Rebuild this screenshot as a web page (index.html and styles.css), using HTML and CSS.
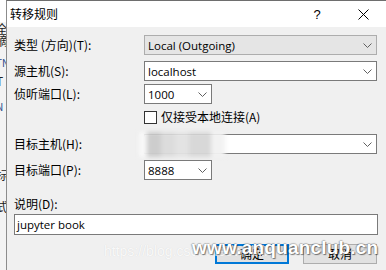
FILE: index.html
```html
<!DOCTYPE html>
<html>
<head>
<meta charset="utf-8">
<link rel="stylesheet" href="styles.css">
</head>
<body>
<div class="screen">
  <div class="behind">
    <div class="frag f1">全</div>
    <div class="frag f2">摘</div>
    <div class="frag f3 blue">TN</div>
    <div class="frag f4">T</div>
    <div class="frag f5 blue">N</div>
    <div class="frag f6">标</div>
    <div class="frag f7">式</div>
  </div>
  <div class="dialog">
    <div class="titlebar">
      <span class="title">转移规则</span>
      <span class="help">?</span>
      <span class="close"><svg width="11" height="11" viewBox="0 0 11 11"><path d="M0.5 0.5 L10.5 10.5 M10.5 0.5 L0.5 10.5" stroke="#000" stroke-width="1" fill="none"/></svg></span>
    </div>
    <div class="body">
      <div class="row r1">
        <span class="lbl">类型 (方向)(T):</span>
        <div class="combo wide grey"><span class="val">Local (Outgoing)</span><svg class="chev" width="9" height="5" viewBox="0 0 9 5"><path d="M0.5 0.5 L4.5 4.5 L8.5 0.5" stroke="#606060" fill="none"/></svg></div>
      </div>
      <div class="row r2">
        <span class="lbl">源主机(S):</span>
        <div class="combo wide"><span class="val">localhost</span><svg class="chev" width="9" height="5" viewBox="0 0 9 5"><path d="M0.5 0.5 L4.5 4.5 L8.5 0.5" stroke="#606060" fill="none"/></svg></div>
      </div>
      <div class="row r3">
        <span class="lbl">侦听端口(L):</span>
        <div class="combo small"><span class="val">1000</span><svg class="chev" width="9" height="5" viewBox="0 0 9 5"><path d="M0.5 0.5 L4.5 4.5 L8.5 0.5" stroke="#606060" fill="none"/></svg></div>
      </div>
      <div class="row r4">
        <span class="lbl"></span>
        <span class="check"></span>
        <span class="checktext">仅接受本地连接(A)</span>
      </div>
      <div class="row r5">
        <span class="lbl">目标主机(H):</span>
        <div class="combo wide host"><span class="val"></span><div class="blur"></div><svg class="chev" width="9" height="5" viewBox="0 0 9 5"><path d="M0.5 0.5 L4.5 4.5 L8.5 0.5" stroke="#606060" fill="none"/></svg></div>
      </div>
      <div class="row r6">
        <span class="lbl">目标端口(P):</span>
        <div class="combo small"><span class="val">8888</span><svg class="chev" width="9" height="5" viewBox="0 0 9 5"><path d="M0.5 0.5 L4.5 4.5 L8.5 0.5" stroke="#606060" fill="none"/></svg></div>
      </div>
      <div class="desc-label">说明(D):</div>
      <div class="textfield">jupyter book</div>
      <div class="buttons">
        <div class="btn ok">确定</div>
        <div class="btn">取消</div>
      </div>
    </div>
  </div>
  <div class="wm1">https://blog.csdn.net/weixin</div>
  <div class="wm2">www.anquanclub.cn</div>
</div>
</body>
</html>
```

FILE: styles.css
```css
* { box-sizing: border-box; }
html, body {
  margin: 0;
  padding: 0;
  background: #f0f0f0;
  overflow: hidden;
}
body {
  font-family: "Noto Sans CJK SC", "Open Sans", sans-serif;
  font-size: 12px;
  color: #000;
}
.screen {
  position: relative;
  width: 386px;
  height: 270px;
  display: flex;
  overflow: hidden;
}
.behind {
  width: 6px;
  flex: none;
  overflow: hidden;
  background: linear-gradient(#ffffff 0 22px, #f3f3f3 22px);
  font-size: 12px;
  line-height: 12px;
}
.frag {
  white-space: nowrap;
  margin-left: -4px;
  color: #222;
}
.frag.blue { color: #2a4a8a; font-size: 10px; }
.f1 { margin-top: 23px; }
.f2 { margin-top: 0; }
.f3 { margin-top: 10px; }
.f4 { margin-top: 6px; }
.f5 { margin-top: 14px; }
.f6 { margin-top: 56px; }
.f7 { margin-top: 20px; }

.dialog {
  flex: 1;
  border-left: 1px solid #8c8c8c;
  border-top: 1px solid #6e6e6e;
  background: #f0f0f0;
  display: flex;
  flex-direction: column;
}
.titlebar {
  height: 26px;
  background: #fff;
  display: flex;
  align-items: center;
  padding-left: 3px;
}
.title {
  font-size: 12px;
  line-height: 14px;
  flex: 1;
}
.help {
  font-family: "Liberation Sans", sans-serif;
  font-size: 13px;
  width: 14px;
  text-align: center;
  margin-right: 34px;
  color: #000;
}
.close {
  width: 11px;
  height: 11px;
  margin-right: 17px;
  display: flex;
}
.body {
  padding: 0 9px 0 7px;
  display: flex;
  flex-direction: column;
}
.row {
  display: flex;
  align-items: center;
}
.lbl {
  width: 130px;
  flex: none;
  line-height: 14px;
}
.r1 { margin-top: 8px; }
.r2 { margin-top: 6px; }
.r3 { margin-top: 3px; }
.r4 { margin-top: 6px; }
.r5 { margin-top: 10px; }
.r6 { margin-top: 6px; }

.combo {
  position: relative;
  height: 20px;
  border: 1px solid #7a7a7a;
  background: #fff;
  display: flex;
  align-items: center;
  padding-left: 3px;
  padding-right: 4px;
  font-family: "Open Sans", "Noto Sans CJK SC", sans-serif;
  font-size: 11.5px;
}
.combo.wide { flex: 1; }
.combo.small { width: 68px; }
.combo.grey {
  background: #e5e5e5;
  border-color: #adadad;
}
.combo .val {
  flex: 1;
  white-space: nowrap;
  overflow: hidden;
}
.combo .chev { flex: none; }
.blur {
  position: absolute;
  left: -6px;
  top: -3px;
  width: 92px;
  height: 25px;
  background: linear-gradient(90deg, #f8f8f8 0 8px, #cdcdcd 8px 22px, #dcdcdc 22px 36px, #e3e3e3 36px 50px, #d8d8d8 50px 72px, #f2f2f2 72px 86px, rgba(255,255,255,0) 86px);
  filter: blur(2px);
}
.check {
  width: 13px;
  height: 13px;
  border: 1px solid #333;
  background: #fff;
  flex: none;
}
.checktext {
  margin-left: 4px;
  line-height: 14px;
}
.desc-label {
  margin-top: 17px;
  line-height: 14px;
}
.textfield {
  margin-top: 3px;
  margin-right: -1px;
  height: 21px;
  border: 1px solid #7a7a7a;
  background: #fff;
  padding-left: 2px;
  display: flex;
  align-items: center;
  font-family: "Open Sans", "Noto Sans CJK SC", sans-serif;
  font-size: 11.5px;
}
.buttons {
  margin-top: 9px;
  display: flex;
  justify-content: flex-end;
  gap: 14px;
}
.btn {
  width: 74px;
  height: 20px;
  border: 1px solid #adadad;
  background: #e1e1e1;
  display: flex;
  align-items: center;
  justify-content: center;
  line-height: 14px;
}
.btn.ok {
  border: 2px solid #0078d7;
}
.wm1 {
  position: absolute;
  left: 104px;
  top: 243px;
  font-family: "Liberation Sans", sans-serif;
  font-size: 14px;
  color: rgba(255,255,255,0.85);
  text-shadow: 0 0 1px rgba(0,0,0,0.12);
  white-space: nowrap;
}
.wm2 {
  position: absolute;
  left: 192px;
  top: 237px;
  font-family: "Liberation Sans", sans-serif;
  font-size: 19px;
  font-weight: bold;
  letter-spacing: 0.2px;
  color: #fff;
  text-shadow: 1px 1px 1px rgba(0,0,0,0.5), -1px 0 1px rgba(0,0,0,0.25), 0 -1px 1px rgba(0,0,0,0.2);
  white-space: nowrap;
}
```
